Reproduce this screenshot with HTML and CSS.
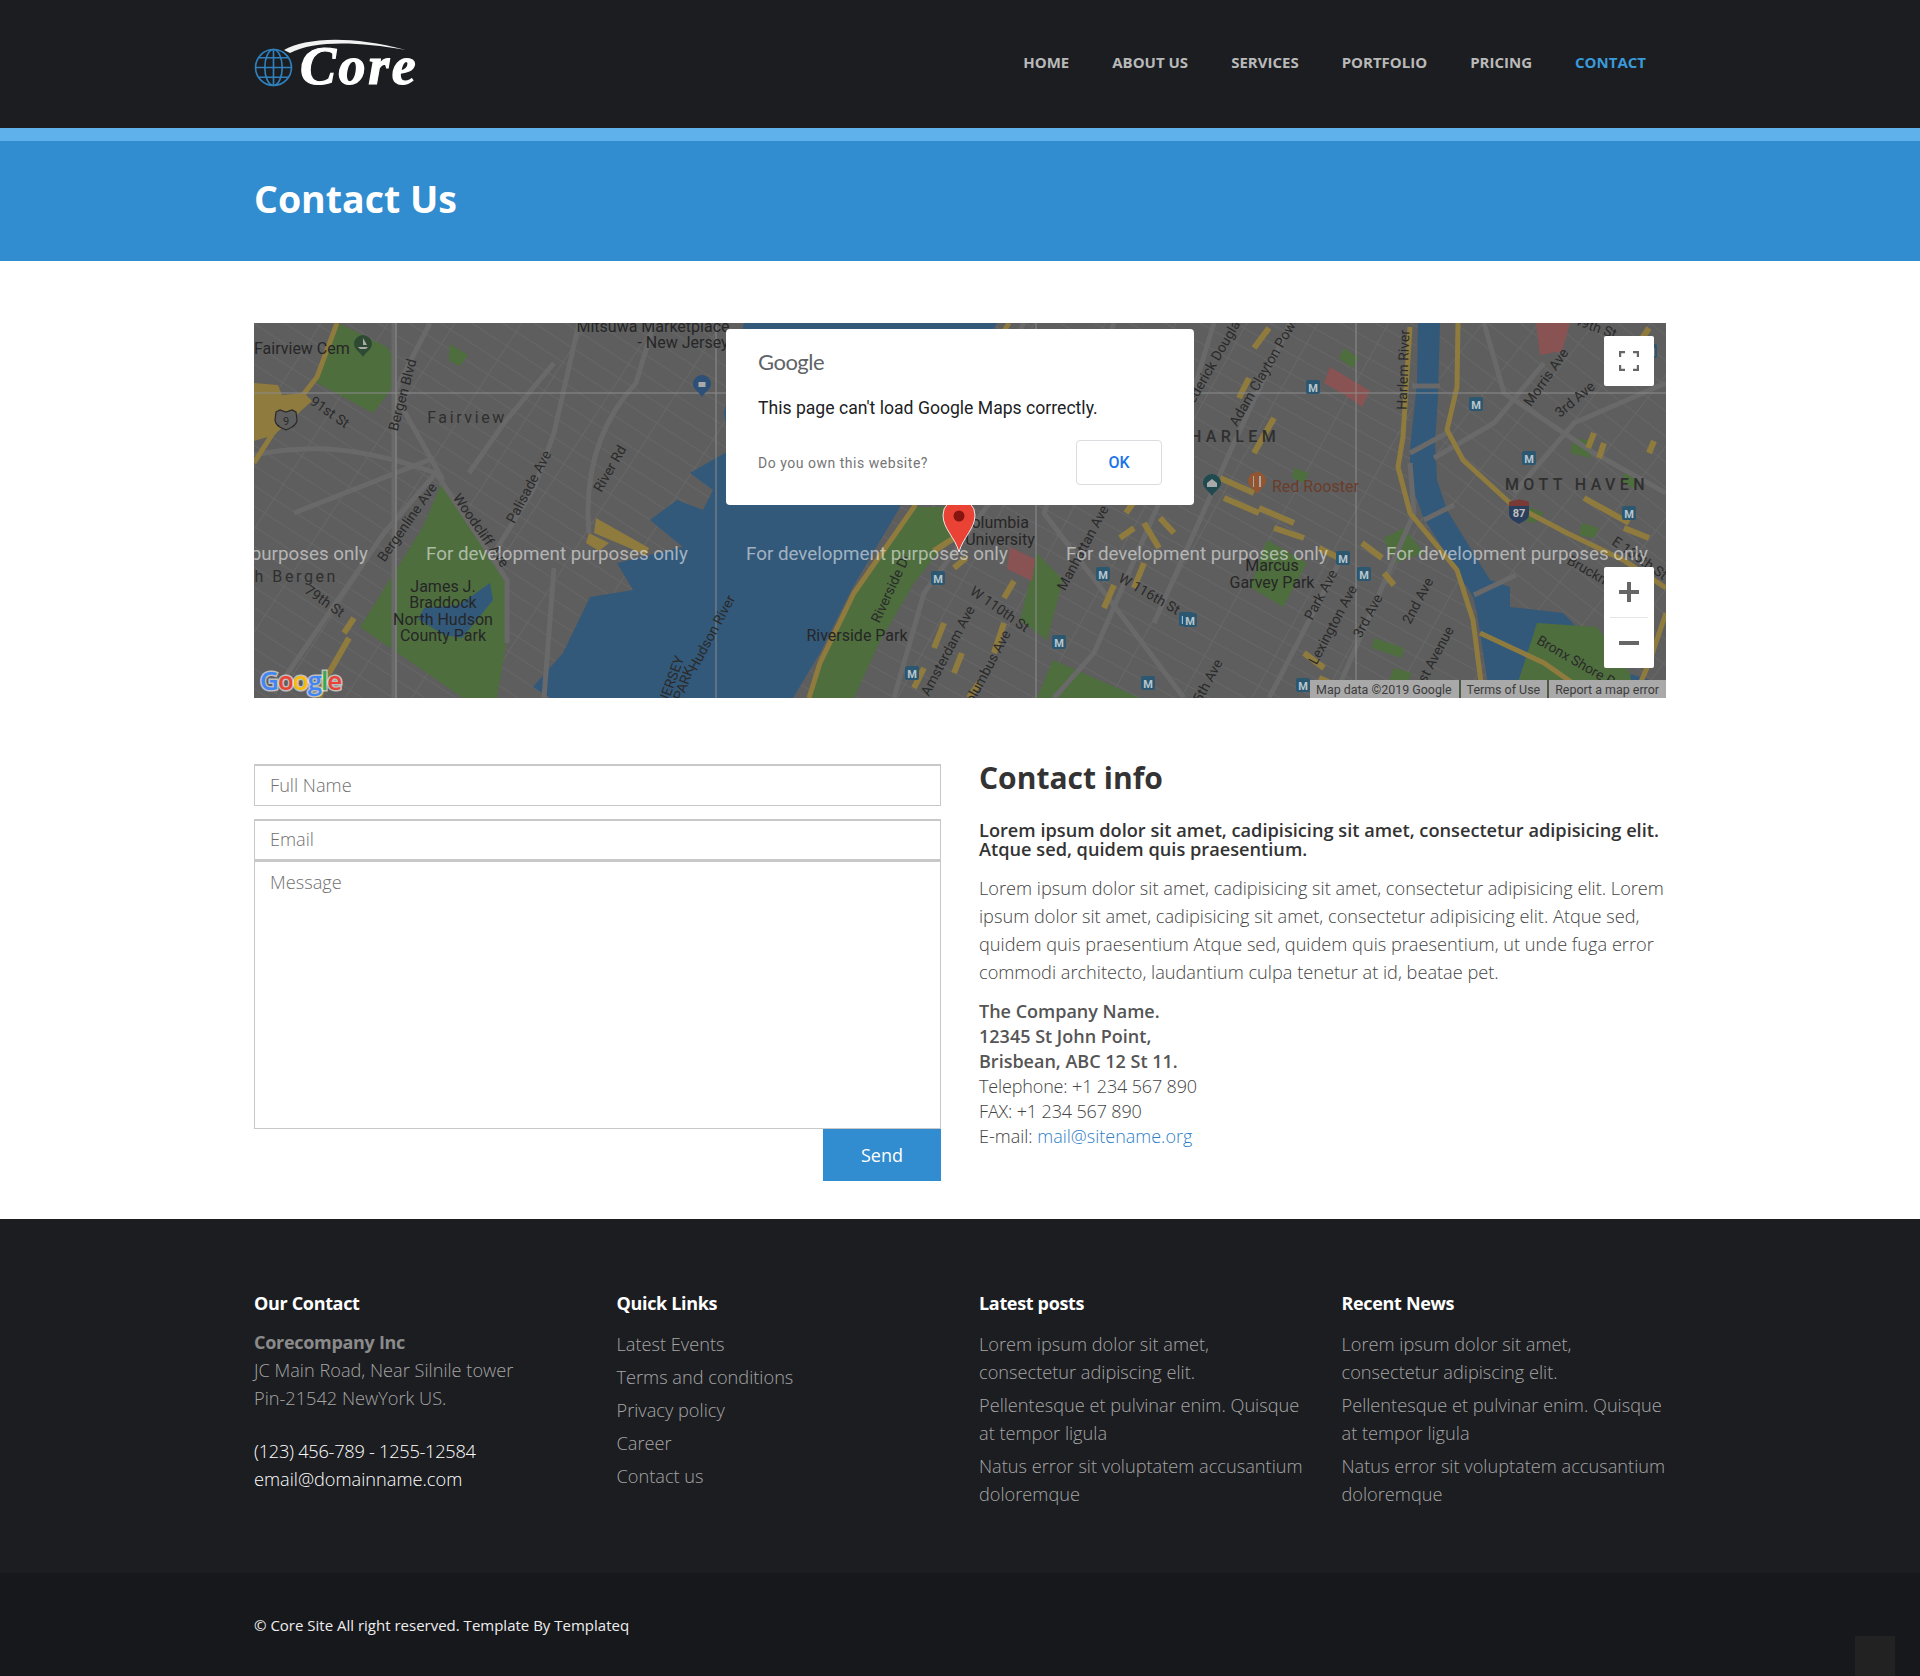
FILE: index.html
```html
<!DOCTYPE html>
<html lang="en">

<head>
    <meta charset="UTF-8">
    <meta name="viewport" content="width=device-width, initial-scale=1.0">
    <title>Contact Us</title>
    <link rel="stylesheet" href="styles.css">
</head>

<body>

    <header class="site-header">
        <div class="container header-row">
            <a class="logo" href="#">
                <svg class="logo-globe" viewBox="0 0 38 38" aria-hidden="true">
                    <circle cx="19" cy="19" r="17.5" />
                    <ellipse cx="19" cy="19" rx="8.5" ry="17.5" />
                    <path d="M19 1.5V36.5M1.5 19H36.5M4.5 9.5H33.500M4.500 28.500H33.500" />
                </svg>
                <svg class="logo-swoosh" viewBox="0 0 124 16" aria-hidden="true">
                    <path d="M0 13C20 2 62 -3 122 13C70 4 30 4 6 16Z" />
                </svg>
                <span class="logo-text">Core</span>
            </a>
            <nav>
                <ul class="main-nav">
                    <li><a href="#">Home</a></li>
                    <li><a href="#">About Us</a></li>
                    <li><a href="#">Services</a></li>
                    <li><a href="#">Portfolio</a></li>
                    <li><a href="#">Pricing</a></li>
                    <li><a class="active" href="#">Contact</a></li>
                </ul>
            </nav>
        </div>
    </header>

    <section class="page-banner">
        <div class="container">
            <h1>Contact Us</h1>
        </div>
    </section>

    <main class="container page-content">

        <div class="map-box">
            <svg class="map-canvas" viewBox="0 0 1412 375" aria-hidden="true">
                <defs>
                    <pattern id="grid-nj" width="56" height="17" patternUnits="userSpaceOnUse" patternTransform="rotate(33)">
                        <path d="M0 0H56M0 0V17" class="grid-line" />
                    </pattern>
                    <pattern id="grid-man" width="62" height="17" patternUnits="userSpaceOnUse" patternTransform="rotate(29)">
                        <path d="M0 0H62M0 0V17" class="grid-line" />
                    </pattern>
                    <pattern id="grid-bx" width="44" height="20" patternUnits="userSpaceOnUse" patternTransform="rotate(38)">
                        <path d="M0 0H44M0 0V20" class="grid-line" />
                    </pattern>
                    <g id="metro">
                        <rect x="-7" y="-7" width="14" height="14" rx="2" class="metro-box" />
                        <text y="4.500" class="metro-letter">M</text>
                    </g>
                </defs>

                <rect width="1412" height="375" class="map-land" />
                <path d="M0 0H490L470 90L476 127L436 150L459 167L449 187L423 177L396 197L429 224L363 240L379 267L336 274L309 330L279 364L296 375H0Z" fill="url(#grid-nj)" />
                <path d="M743 0H1164L1156 127L1156 157L1219 274L1236 375H539L566 330L599 264L646 184Z" fill="url(#grid-man)" />
                <path d="M1186 0H1412V375H1236L1256 264L1193 187L1181 120Z" fill="url(#grid-bx)" />

                <!-- water -->
                <path class="map-water" d="M490 0H743L646 184L599 264L566 330L539 375H296L279 364L309 330L336 274L379 267L363 240L429 224L396 197L423 177L449 187L459 167L436 150L476 127L470 90Z" />
                <path class="map-water" d="M1164 0H1186L1184 74L1181 120L1183 157L1193 187L1236 257L1256 264L1256 284L1309 290L1349 330L1373 350L1412 362V375H1236L1223 290L1219 274L1169 194L1156 157L1156 127L1163 60Z" />

                <!-- parks -->
                <path class="map-park" d="M84 0L133 24L143 40L139 64L119 90L63 60Z" />
                <path class="map-park" d="M196 21L214 32L206 43L195 38Z" />
                <path class="map-park" d="M189 157L236 237L253 257L253 314L243 375H209L106 304L169 204Z" />
                <path class="map-water" d="M236 260L239 277L222 298L208 315L190 312L164 296L170 285L205 282Z" />
                <path class="map-park" d="M660 184H720L660 260L625 320L600 375H555L566 340L600 270Z" />
                <path class="map-park" d="M783 230L809 257L793 317L766 297Z" />
                <path class="map-park" d="M799 337L886 375H783Z" />
                <path class="map-park" d="M1013 217L1053 240L1029 284L996 264Z" />
                <path class="map-park" d="M1283 300L1343 304L1376 350L1379 375H1259Z" />
                <path class="map-park" d="M1130 215L1150 205L1170 230L1140 240Z" />
                <path class="map-park" d="M1320 115L1340 118L1336 135L1316 130ZM1370 150L1385 155L1380 165L1368 160ZM1265 180L1290 190L1280 200L1262 195ZM1328 200L1345 205L1340 215L1325 212ZM1090 25L1105 35L1098 45L1085 35ZM1040 145L1055 150L1050 160L1038 155Z" />
                <path class="map-park" d="M1120 315L1150 325L1148 335L1118 325ZM1140 345L1158 350L1152 362L1135 358Z" />

                <!-- red blocks -->
                <path class="map-red" d="M756 224L781 236L778 258L753 246Z" />
                <path class="map-red" d="M1076 44L1116 68L1108 84L1094 74L1070 60Z" />
                <path class="map-red" d="M1282 0H1316L1308 28L1286 32Z" />

                <!-- main roads -->
                <path class="road-major" d="M140 0V120L140 375M0 132C60 120 110 125 182 150L253 257V320M189 157L140 70L176 0M40 190L180 135M20 370L130 210L182 150" />
                <path class="road-major" d="M325 0L300 110L280 165L236 237M335 210C330 150 345 100 382 60L400 0M300 245L290 375M300 40L250 100L215 150" />
                <path class="road-major" d="M640 375L670 270L750 160M770 0L680 170M930 375L790 190L860 0M960 0L905 180L840 330L800 375M1036 0L980 120L900 300M1080 375L1160 190L1156 140M1015 375L1090 230M1230 0L1250 70L1340 130L1412 170M1260 170L1320 100L1412 60M1180 135L1240 100L1290 40" />
                <path class="road-major" d="M1158 63H1186M1156 130L1193 110M1170 197L1200 182M1220 272L1262 252" />

                <!-- highways -->
                <path class="road-highway" d="M83 0L63 54L19 110L0 140" />
                <path class="road-highway" d="M755 0L700 90L660 184L600 270L566 340L555 375" />
                <path class="road-highway" d="M1156 4L1149 114L1144 144L1156 190L1203 247L1219 297L1229 375" />
                <path class="road-highway" d="M1204 0L1203 64L1193 107L1209 137L1256 180L1313 210L1369 237L1412 265" />
                <path class="road-highway" d="M1226 310L1290 340L1340 375M1412 290L1395 340L1380 375" />

                <!-- yellow blocks -->
                <path class="map-gold" d="M0 60L24 62L28 72L50 70L58 78L20 112L0 118ZM342 195L395 225L392 232L340 210ZM335 210L355 220L345 228L332 220Z" />
                <path class="map-gold-line" d="M100 295L90 310M95 315L75 350M74 350L65 375M680 228L700 215M700 245L712 235M750 275L760 258M690 300L680 325M670 345L660 365M708 330L700 350M750 300L740 330M725 360L715 375" />
                <path class="map-gold-line" d="M872 190L886 170M866 215L880 205M890 200L905 225M906 195L920 210M850 285L860 262M880 265L890 240M1000 130L1020 95M1000 25L1015 5M985 75L995 55M966 155L1000 170M970 175L1005 190M1005 185L1040 200M1020 205L1050 215M1065 225L1085 235M1108 220L1128 235M1130 250L1140 262M1050 330L1070 345M1065 355L1095 368" />
                <path class="map-gold-line" d="M1330 175L1375 200M1370 205L1395 215M1334 125L1340 110M1345 135L1350 120M1395 130L1400 118M1385 20L1395 5" />

                <!-- tile seams -->
                <path class="tile-seam" d="M142 0V375M462 0V375M782 0V375M1102 0V375M0 70H1412" />

                <!-- place pins -->
                <g class="pin-green" transform="translate(109 22)"><path d="M-9 -1A9 9 0 1 1 9 -1C9 4 3 7 0 12C-3 7 -9 4 -9 -1Z" /><path class="pin-mark" d="M-5 2H5L3 4H-3ZM0 -7L4 0H0Z" /></g>
                <g class="pin-blue" transform="translate(448 62)"><path d="M-9 -1A9 9 0 1 1 9 -1C9 4 3 7 0 12C-3 7 -9 4 -9 -1Z" /><rect class="pin-mark" x="-3.500" y="-3" width="7" height="5" /></g>
                <g class="pin-teal" transform="translate(958 161)"><path d="M-9 -1A9 9 0 1 1 9 -1C9 4 3 7 0 12C-3 7 -9 4 -9 -1Z" /><path class="pin-mark" d="M-5 -1L0 -5L5 -1V3H-5Z" /></g>
                <g class="pin-orange" transform="translate(1003 159)"><path d="M-9 -1A9 9 0 1 1 9 -1C9 4 3 7 0 12C-3 7 -9 4 -9 -1Z" /><path class="pin-mark" d="M-4 -6H-3V5H-4ZM2 -6H4V5H2Z" /></g>

                <!-- road shields -->
                <path class="shield-us" d="M22 89L26 87L32 89L38 87L42 89L43 97C43 103 36 105 32 107C28 105 21 103 21 97Z" />
                <text x="32" y="102" class="shield-num">9</text>
                <g transform="translate(1265 189)">
                    <path class="shield-i" d="M-10 -10H10V2C10 8 3 10 0 12C-3 10 -10 8 -10 2Z" />
                    <path class="shield-i-top" d="M-10 -10C-6 -12 -3 -11 0 -13C3 -11 6 -12 10 -10V-6H-10Z" />
                    <text y="5" class="shield-num shield-num-light">87</text>
                </g>

                <!-- metro stops -->
                <use href="#metro" x="684" y="255" /><use href="#metro" x="849" y="251" /><use href="#metro" x="932" y="296" />
                <use href="#metro" x="805" y="319" /><use href="#metro" x="658" y="350" /><use href="#metro" x="894" y="360" />
                <use href="#metro" x="1059" y="64" /><use href="#metro" x="1222" y="81" /><use href="#metro" x="1275" y="135" />
                <use href="#metro" x="1375" y="190" /><use href="#metro" x="1110" y="251" /><use href="#metro" x="1049" y="362" />
                <use href="#metro" x="1089" y="235" /><use href="#metro" x="936" y="297" /><use href="#metro" x="1396" y="28" />

                <!-- street and place names -->
                <text x="0" y="31" class="map-name">Fairview Cem</text>
                <text x="213" y="100" class="map-area">Fairview</text>
                <text x="84" y="259" class="map-area map-end">North Bergen</text>
                <text x="399" y="9" class="map-name map-mid">Mitsuwa Marketplace</text>
                <text x="429" y="25" class="map-name map-mid">- New Jersey</text>
                <text x="189" y="269" class="map-name map-mid">James J.</text>
                <text x="189" y="285" class="map-name map-mid">Braddock</text>
                <text x="189" y="302" class="map-name map-mid">North Hudson</text>
                <text x="189" y="318" class="map-name map-mid">County Park</text>
                <text x="741" y="205" class="map-name map-mid">Columbia</text>
                <text x="746" y="222" class="map-name map-mid">University</text>
                <text x="603" y="318" class="map-name map-mid">Riverside Park</text>
                <text x="981" y="119" class="map-area map-strong">HARLEM</text>
                <text x="1323" y="167" class="map-area map-strong">MOTT HAVEN</text>
                <text x="1018" y="169" class="map-name map-rooster">Red Rooster</text>
                <text x="1018" y="248" class="map-name map-mid">Marcus</text>
                <text x="1018" y="265" class="map-name map-mid">Garvey Park</text>

                <text transform="translate(153 73) rotate(-75)" class="map-street">Bergen Blvd</text>
                <text transform="translate(73 93) rotate(35)" class="map-street">91st St</text>
                <text transform="translate(157 202) rotate(-55)" class="map-street">Bergenline Ave</text>
                <text transform="translate(223 210) rotate(55)" class="map-street">Woodcliff Ave</text>
                <text transform="translate(279 166) rotate(-62)" class="map-street">Palisade Ave</text>
                <text transform="translate(360 148) rotate(-60)" class="map-street">River Rd</text>
                <text transform="translate(68 282) rotate(35)" class="map-street">79th St</text>
                <text transform="translate(462 312) rotate(-62)" class="map-street">Hudson River</text>
                <text transform="translate(422 358) rotate(-70)" class="map-street">JERSEY</text>
                <text transform="translate(434 362) rotate(-70)" class="map-street">PARK</text>
                <text transform="translate(641 267) rotate(-65)" class="map-street">Riverside Dr</text>
                <text transform="translate(698 330) rotate(-62)" class="map-street">Amsterdam Ave</text>
                <text transform="translate(743 290) rotate(35)" class="map-street">W 110th St</text>
                <text transform="translate(736 350) rotate(-62)" class="map-street">Columbus Ave</text>
                <text transform="translate(833 227) rotate(-62)" class="map-street">Manhattan Ave</text>
                <text transform="translate(893 275) rotate(30)" class="map-street">W 116th St</text>
                <text transform="translate(964 40) rotate(-60)" class="map-street">Frederick Douglass</text>
                <text transform="translate(1016 47) rotate(-60)" class="map-street">Adam Clayton Powell</text>
                <text transform="translate(1071 274) rotate(-62)" class="map-street">Park Ave</text>
                <text transform="translate(1083 304) rotate(-62)" class="map-street">Lexington Ave</text>
                <text transform="translate(1118 295) rotate(-62)" class="map-street">3rd Ave</text>
                <text transform="translate(1168 280) rotate(-62)" class="map-street">2nd Ave</text>
                <text transform="translate(1184 337) rotate(-62)" class="map-street">1st Avenue</text>
                <text transform="translate(958 360) rotate(-62)" class="map-street">5th Ave</text>
                <text transform="translate(1154 47) rotate(-88)" class="map-street">Harlem River</text>
                <text transform="translate(1296 57) rotate(-55)" class="map-street">Morris Ave</text>
                <text transform="translate(1324 80) rotate(-40)" class="map-street">3rd Ave</text>
                <text transform="translate(1336 7) rotate(20)" class="map-street">149th St</text>
                <text transform="translate(1383 239) rotate(35)" class="map-street">E 135th St</text>
                <text transform="translate(1336 254) rotate(30)" class="map-street">Bruckner</text>
                <text transform="translate(1323 344) rotate(30)" class="map-street">Bronx Shore Rd</text>

                <!-- watermark -->
                <text x="-148" y="237" class="map-watermark">For development purposes only</text>
                <text x="172" y="237" class="map-watermark">For development purposes only</text>
                <text x="492" y="237" class="map-watermark">For development purposes only</text>
                <text x="812" y="237" class="map-watermark">For development purposes only</text>
                <text x="1132" y="237" class="map-watermark">For development purposes only</text>

                <!-- marker -->
                <path class="marker-body" d="M705 229C701 214 689 206 689 192A16 16 0 1 1 721 192C721 206 709 214 705 229Z" />
                <circle class="marker-dot" cx="705" cy="193" r="5.500" />

                <!-- google mark -->
                <text x="6" y="367" class="map-google"><tspan fill="#4285f4">G</tspan><tspan fill="#ea4335">o</tspan><tspan fill="#fbbc05">o</tspan><tspan fill="#4285f4">g</tspan><tspan fill="#34a853">l</tspan><tspan fill="#ea4335">e</tspan></text>
            </svg>

            <button class="map-btn map-btn-full" type="button" aria-label="Toggle fullscreen">
                <svg viewBox="0 0 20 20" aria-hidden="true">
                    <path d="M1 6V1H6M14 1H19V6M19 14V19H14M6 19H1V14" />
                </svg>
            </button>

            <div class="map-zoom">
                <button class="map-btn-zoom" type="button" aria-label="Zoom in">
                    <svg viewBox="0 0 20 20" aria-hidden="true"><path d="M0 8H8V0H12V8H20V12H12V20H8V12H0Z" /></svg>
                </button>
                <span class="map-zoom-rule"></span>
                <button class="map-btn-zoom" type="button" aria-label="Zoom out">
                    <svg viewBox="0 0 20 20" aria-hidden="true"><path d="M0 8H20V12H0Z" /></svg>
                </button>
            </div>

            <div class="map-credits">
                <span>Map data ©2019 Google</span>
                <span>Terms of Use</span>
                <span>Report a map error</span>
            </div>

            <div class="map-dialog">
                <div class="map-dialog-logo">Google</div>
                <p class="map-dialog-text">This page can't load Google Maps correctly.</p>
                <div class="map-dialog-row">
                    <a class="map-dialog-link" href="#">Do you own this website?</a>
                    <button class="map-dialog-ok" type="button">OK</button>
                </div>
            </div>
        </div>

        <div class="contact-row">
            <form class="contact-form" action="javascript:void(0)">
                <input class="field field-name" type="text" placeholder="Full Name">
                <input class="field field-email" type="email" placeholder="Email">
                <textarea class="field field-message" placeholder="Message"></textarea>
                <button class="send-btn" type="submit">Send</button>
            </form>

            <div class="contact-info">
                <h2>Contact info</h2>
                <p class="info-lead">Lorem ipsum dolor sit amet, cadipisicing sit amet, consectetur adipisicing elit. Atque sed, quidem quis praesentium.</p>
                <p class="info-text">Lorem ipsum dolor sit amet, cadipisicing sit amet, consectetur adipisicing elit. Lorem ipsum dolor sit amet, cadipisicing sit amet, consectetur adipisicing elit. Atque sed, quidem quis praesentium Atque sed, quidem quis praesentium, ut unde fuga error commodi architecto, laudantium culpa tenetur at id, beatae pet.</p>
                <address class="info-address">
                    <strong>The Company Name.</strong><br>
                    <strong>12345 St John Point,</strong><br>
                    <strong>Brisbean, ABC 12 St 11.</strong><br>
                    <span class="info-number">Telephone: +1 234 567 890</span><br>
                    <span class="info-number">FAX: +1 234 567 890</span><br>
                    E-mail: <a href="#">mail@sitename.org</a>
                </address>
            </div>
        </div>
    </main>

    <footer class="site-footer">
        <div class="container footer-grid">
            <div class="footer-col">
                <h4>Our Contact</h4>
                <p class="footer-address"><strong>Corecompany Inc</strong><br>JC Main Road, Near Silnile tower<br>Pin-21542 NewYork US.</p>
                <p class="footer-phone"><span class="footer-number">(123) 456-789 - 1255-12584</span><br>email@domainname.com</p>
            </div>
            <div class="footer-col">
                <h4>Quick Links</h4>
                <ul class="footer-links">
                    <li><a href="#">Latest Events</a></li>
                    <li><a href="#">Terms and conditions</a></li>
                    <li><a href="#">Privacy policy</a></li>
                    <li><a href="#">Career</a></li>
                    <li><a href="#">Contact us</a></li>
                </ul>
            </div>
            <div class="footer-col">
                <h4>Latest posts</h4>
                <ul class="footer-posts">
                    <li>Lorem ipsum dolor sit amet, consectetur adipiscing elit.</li>
                    <li>Pellentesque et pulvinar enim. Quisque at tempor ligula</li>
                    <li>Natus error sit voluptatem accusantium doloremque</li>
                </ul>
            </div>
            <div class="footer-col">
                <h4>Recent News</h4>
                <ul class="footer-posts">
                    <li>Lorem ipsum dolor sit amet, consectetur adipiscing elit.</li>
                    <li>Pellentesque et pulvinar enim. Quisque at tempor ligula</li>
                    <li>Natus error sit voluptatem accusantium doloremque</li>
                </ul>
            </div>
        </div>
        <div class="footer-bottom">
            <div class="container">
                <p>© Core Site All right reserved. Template By Templateq</p>
            </div>
            <a class="to-top" href="#" aria-label="Back to top"></a>
        </div>
    </footer>

</body>

</html>
```

FILE: styles.css
```css
* {
    margin: 0;
    padding: 0;
    box-sizing: border-box;
}

body {
    font-family: 'Open Sans', sans-serif;
    background-color: #fff;
    color: #777;
    font-size: 18.2px;
    line-height: 28px;
}

a {
    text-decoration: none;
}

.container {
    width: 1412px;
    margin: 0 auto;
}

/* Header */
.site-header {
    height: 128px;
    background-color: #1c1d21;
}

.header-row {
    display: flex;
    justify-content: space-between;
    align-items: flex-start;
}

.logo {
    position: relative;
    display: block;
    width: 170px;
    height: 128px;
}

.logo-globe {
    position: absolute;
    left: 0;
    top: 48px;
    width: 39px;
    height: 39px;
    fill: none;
    stroke: #2f80bd;
    stroke-width: 1.6;
}

.logo-swoosh {
    position: absolute;
    left: 30px;
    top: 37px;
    width: 124px;
    height: 16px;
    fill: #f2f2f2;
}

.logo-text {
    position: absolute;
    left: 46px;
    top: 31px;
    font-family: 'Liberation Serif', serif;
    font-size: 54px;
    line-height: 70px;
    letter-spacing: 2.6px;
    font-style: italic;
    font-weight: 700;
    color: #fff;
    -webkit-text-stroke: 1.2px #fff;
}

.main-nav {
    list-style: none;
    display: flex;
    gap: 43px;
    padding: 47px 20px 0 0;
}

.main-nav a {
    font-size: 15px;
    line-height: 22px;
    font-weight: 700;
    text-transform: uppercase;
    color: #b9b9b9;
}

.main-nav a.active {
    color: #3a9ad9;
}

/* Banner */
.page-banner {
    height: 133px;
    background-color: #318dcf;
    border-top: 13px solid #5fb1ec;
}

.page-banner h1 {
    padding-top: 32px;
    font-size: 37.5px;
    line-height: 52px;
    font-weight: 700;
    color: #fff;
}

.page-content {
    padding-top: 62px;
}

/* Map */
.map-box {
    position: relative;
    height: 375px;
    overflow: hidden;
}

.map-canvas {
    display: block;
    width: 1412px;
    height: 375px;
    font-family: Roboto, sans-serif;
}

.map-land { fill: #5e5e5e; }
.map-water { fill: #33597a; }
.map-park { fill: #4e6e3e; }
.map-red { fill: #8a5353; }
.map-gold { fill: #8e7b3d; }

.map-gold-line {
    fill: none;
    stroke: #8e7b3d;
    stroke-width: 6;
}

.grid-line {
    fill: none;
    stroke: #696969;
    stroke-width: 1.6;
}

.road-major {
    fill: none;
    stroke: #696969;
    stroke-width: 5;
}

.road-highway {
    fill: none;
    stroke: #8e7b3d;
    stroke-width: 5;
}

.tile-seam {
    fill: none;
    stroke: #8d8d8d;
    stroke-width: 1;
}

.metro-box { fill: #2b5870; }

.metro-letter {
    font-size: 11px;
    font-weight: 700;
    text-anchor: middle;
    fill: #b8c6cf;
}

.pin-green { fill: #2f4a33; }
.pin-blue { fill: #2c5078; }
.pin-teal { fill: #1f4a50; }
.pin-orange { fill: #92552f; }
.pin-mark { fill: #a9a9a9; }

.shield-us {
    fill: #5e5e5e;
    stroke: #2a2a2a;
    stroke-width: 1.2;
}

.shield-i { fill: #2a3f5e; }
.shield-i-top { fill: #7a3a36; }

.shield-num {
    font-size: 11px;
    text-anchor: middle;
    fill: #2a2a2a;
}

.shield-num-light {
    font-weight: 700;
    fill: #c0c0c0;
}

.map-name {
    font-size: 16px;
    fill: #262626;
}

.map-mid { text-anchor: middle; }
.map-rooster { fill: #6a3c2a; }

.map-area {
    font-size: 16px;
    letter-spacing: 2.6px;
    text-anchor: middle;
    fill: #2f2f2f;
}

.map-end { text-anchor: end; }

.map-strong {
    font-weight: 500;
    letter-spacing: 4.4px;
}

.map-street {
    font-size: 14px;
    text-anchor: middle;
    fill: #2a2a2a;
}

.map-watermark {
    font-size: 18.8px;
    fill: rgba(255, 255, 255, 0.55);
}

.marker-body {
    fill: #ea4335;
    stroke: #e9e9e9;
    stroke-width: 1;
}

.marker-dot { fill: #861410; }

.map-google {
    font-family: 'Open Sans', sans-serif;
    font-size: 26px;
    font-weight: 600;
    letter-spacing: -1px;
    stroke: rgba(255, 255, 255, 0.6);
    stroke-width: 3px;
    paint-order: stroke;
}

.map-btn {
    position: absolute;
    top: 13px;
    right: 12px;
    width: 50px;
    height: 50px;
    background-color: #fff;
    border: none;
    border-radius: 2px;
    display: flex;
    align-items: center;
    justify-content: center;
}

.map-btn svg {
    width: 20px;
    height: 20px;
    fill: none;
    stroke: #666;
    stroke-width: 2.4;
}

.map-zoom {
    position: absolute;
    top: 244px;
    right: 12px;
    width: 50px;
    height: 101px;
    background-color: #fff;
    border-radius: 2px;
    display: flex;
    flex-direction: column;
    align-items: center;
}

.map-btn-zoom {
    width: 50px;
    height: 50px;
    background: none;
    border: none;
    display: flex;
    align-items: center;
    justify-content: center;
}

.map-btn-zoom svg {
    width: 20px;
    height: 20px;
    fill: #666;
}

.map-zoom-rule {
    width: 38px;
    height: 1px;
    background-color: #e6e6e6;
}

.map-credits {
    position: absolute;
    right: 0;
    bottom: 0;
    display: flex;
    height: 18px;
    font-family: Roboto, sans-serif;
    font-size: 12.45px;
    line-height: 19px;
    color: #3c3c3c;
    background-color: #a9a9a9;
}

.map-credits span {
    padding: 0 7px 0 6px;
}

.map-credits span:first-child {
    padding-left: 6px;
}

.map-credits span + span {
    border-left: 2px solid #4b5a45;
}

.map-credits span:last-child {
    padding-right: 7px;
}

.map-dialog {
    position: absolute;
    left: 472px;
    top: 6px;
    width: 468px;
    height: 176px;
    padding: 18px 32px 0;
    background-color: #fff;
    border-radius: 4px;
    font-family: Roboto, sans-serif;
}

.map-dialog-logo {
    font-family: Lato, sans-serif;
    font-size: 22px;
    line-height: 30px;
    letter-spacing: -0.5px;
    color: #5f6368;
}

.map-dialog-text {
    margin-top: 19px;
    font-size: 17.6px;
    line-height: 24px;
    color: #202124;
}

.map-dialog-row {
    display: flex;
    justify-content: space-between;
    align-items: center;
    margin-top: 20px;
}

.map-dialog-link {
    font-size: 14px;
    line-height: 28px;
    letter-spacing: 0.52px;
    color: #757575;
}

.map-dialog-ok {
    width: 86px;
    height: 45px;
    font-family: Roboto, sans-serif;
    font-size: 16px;
    font-weight: 500;
    color: #1a73e8;
    background-color: #fff;
    border: 1px solid #dadce0;
    border-radius: 4px;
}

/* Contact */
.contact-row {
    display: grid;
    grid-template-columns: 687px 687px;
    gap: 38px;
    margin-top: 66px;
    padding-bottom: 38px;
}

.contact-form {
    display: flex;
    flex-direction: column;
}

.field {
    width: 100%;
    padding: 0 15px 2px;
    font-family: 'Open Sans', sans-serif;
    font-size: 18.2px;
    font-weight: 300;
    color: #555;
    background-color: #fff;
    border: 1px solid #c8c8c8;
    border-radius: 0;
}

.field::placeholder {
    color: #707070;
    opacity: 1;
}

.field-name {
    height: 42px;
    margin-bottom: 13px;
    border-top-width: 2px;
}

.field-email {
    height: 42px;
    border-top-width: 2px;
    border-bottom-width: 2px;
}

.field-message {
    height: 268px;
    padding-top: 6px;
    resize: none;
    display: block;
    line-height: 28px;
    border-top-width: 1px;
}

.send-btn {
    align-self: flex-end;
    width: 118px;
    height: 52px;
    padding-bottom: 1px;
    font-family: 'Open Sans', sans-serif;
    font-size: 18px;
    color: #fff;
    background-color: #318dcf;
    border: none;
}

.contact-info h2 {
    margin-top: -1px;
    font-size: 30px;
    line-height: 30px;
    font-weight: 700;
    color: #333;
}

.info-lead {
    margin-top: 28px;
    font-weight: 600;
    line-height: 19px;
    color: #333;
}

.info-text {
    margin-top: 15px;
    font-weight: 300;
    color: #444;
}

.info-address {
    margin-top: 13px;
    font-size: 18px;
    font-style: normal;
    font-weight: 300;
    line-height: 25px;
    color: #444;
}

.info-address strong {
    font-weight: 600;
    color: #555;
}

.info-number {
    letter-spacing: -0.15px;
}

.info-address a {
    color: #2f7fc6;
}

/* Footer */
.site-footer {
    background-color: #1c1d21;
    color: #a5a5a5;
}

.footer-grid {
    display: grid;
    grid-template-columns: repeat(4, 324.5px);
    gap: 38px;
    height: 354px;
    padding-top: 71px;
    font-weight: 300;
}

.footer-col h4 {
    font-size: 18px;
    line-height: 26px;
    font-weight: 700;
    letter-spacing: -0.33px;
    color: #fff;
}

.footer-address {
    margin-top: 12px;
}

.footer-address strong {
    font-weight: 700;
    font-size: 18px;
    letter-spacing: -0.3px;
    color: #8a8a8a;
}

.footer-phone {
    margin-top: 25px;
    color: #fff;
}

.footer-number {
    letter-spacing: -0.26px;
}

.footer-links {
    list-style: none;
    margin-top: 12px;
}

.footer-links li {
    line-height: 33px;
}

.footer-links a {
    color: #a5a5a5;
}

.footer-posts {
    list-style: none;
    margin-top: 14px;
}

.footer-posts li {
    margin-bottom: 5px;
}

.footer-bottom {
    position: relative;
    height: 103px;
    padding-top: 39px;
    background-color: #17181c;
    overflow: hidden;
}

.footer-bottom p {
    font-size: 15px;
    line-height: 26px;
    color: #eee;
}

.to-top {
    position: absolute;
    right: 25px;
    bottom: 0;
    width: 40px;
    height: 40px;
    background-color: #222;
}
```
